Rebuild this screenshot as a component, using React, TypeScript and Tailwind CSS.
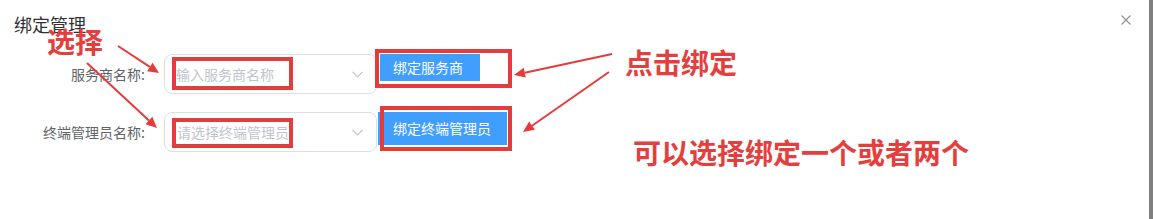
import React from "react"

const RED = "#e23c3c"

function Arrow({ x1, y1, x2, y2 }: { x1: number; y1: number; x2: number; y2: number }) {
    const a = Math.atan2(y2 - y1, x2 - x1)
    const len = 11
    const half = 5
    const bx = x2 - Math.cos(a) * len
    const by = y2 - Math.sin(a) * len
    const px = -Math.sin(a) * half
    const py = Math.cos(a) * half
    return (
        <g>
            <line x1={x1} y1={y1} x2={bx} y2={by} stroke={RED} strokeWidth={2} />
            <polygon points={`${x2},${y2} ${bx + px},${by + py} ${bx - px},${by - py}`} fill={RED} />
        </g>
    )
}

function Chevron() {
    return (
        <svg width="11" height="7" viewBox="0 0 11 7" fill="none">
            <polyline points="0.5,0.8 5.5,5.8 10.5,0.8" stroke="#c0c4cc" strokeWidth="1.2" />
        </svg>
    )
}

export default function App() {
    return (
        <div className="flex h-[219px] w-[1153px] bg-white font-['Noto_Sans_CJK_SC','Noto_Sans',sans-serif]">
            <div className="relative flex-1">
                {/* header */}
                <div className="flex items-start justify-between pl-[14px] pr-[18px] pt-[12px]">
                    <h2 className="text-[18px] leading-[24px] text-[#303133]">绑定管理</h2>
                    <button className="mt-[3px]">
                        <svg width="10" height="10" viewBox="0 0 10 10">
                            <path d="M0.5 0.5 L9.5 9.5 M9.5 0.5 L0.5 9.5" stroke="#909399" strokeWidth="1.3" />
                        </svg>
                    </button>
                </div>

                {/* 服务商 */}
                <div className="mt-[18px] flex items-start">
                    <label className="w-[145px] text-right text-[14px] leading-[40px] text-[#606266]">服务商名称:</label>
                    <div className="relative ml-[19px] flex h-[40px] w-[213px] items-center justify-between rounded-[8px] border border-[#dcdfe6] pl-[11px] pr-[13px]">
                        <span className="text-[14px] text-[#c0c4cc]">输入服务商名称</span>
                        <Chevron />
                        <div className="absolute left-[7px] top-[2px] h-[33px] w-[121px] border-[4px] border-[#e23c3c]" />
                    </div>
                    <div className="relative ml-[3px]">
                        <button className="flex h-[27px] w-[100px] items-center bg-[#409eff] pl-[13px] text-[14px] text-white">
                            绑定服务商
                        </button>
                        <div className="absolute left-[-5px] top-[-5px] h-[39px] w-[137px] border-[4px] border-[#e23c3c]" />
                    </div>
                </div>

                {/* 终端管理员 */}
                <div className="mt-[18px] flex items-start">
                    <label className="w-[145px] text-right text-[14px] leading-[40px] text-[#606266]">终端管理员名称:</label>
                    <div className="relative ml-[19px] flex h-[40px] w-[213px] items-center justify-between rounded-[8px] border border-[#dcdfe6] pl-[12px] pr-[13px]">
                        <span className="text-[14px] text-[#c0c4cc]">请选择终端管理员</span>
                        <Chevron />
                        <div className="absolute left-[7px] top-[5px] h-[30px] w-[121px] border-[4px] border-[#e23c3c]" />
                    </div>
                    <div className="relative ml-[1px]">
                        <button className="flex h-[33px] w-[129px] items-center bg-[#409eff] pl-[15px] text-[14px] text-white">
                            绑定终端管理员
                        </button>
                        <div className="absolute left-[2px] top-[-6px] h-[45px] w-[132px] border-[4px] border-[#e23c3c]" />
                    </div>
                </div>

                {/* annotations */}
                <span className="absolute left-[47px] top-[27px] text-[28px] font-bold leading-none text-[#e43f3f]">选择</span>
                <span className="absolute left-[625px] top-[48px] text-[28px] font-bold leading-none text-[#e43f3f]">点击绑定</span>
                <span className="absolute left-[633px] top-[138px] text-[28px] font-bold leading-none text-[#e43f3f]">可以选择绑定一个或者两个</span>
                <svg className="pointer-events-none absolute left-0 top-0" width="1149" height="219">
                    <Arrow x1={118} y1={46} x2={159} y2={73} />
                    <Arrow x1={87} y1={63} x2={157} y2={128} />
                    <Arrow x1={612} y1={54} x2={514} y2={75} />
                    <Arrow x1={609} y1={72} x2={523} y2={132} />
                </svg>
            </div>
            <div className="w-[4px] bg-[#808080]" />
        </div>
    )
}
